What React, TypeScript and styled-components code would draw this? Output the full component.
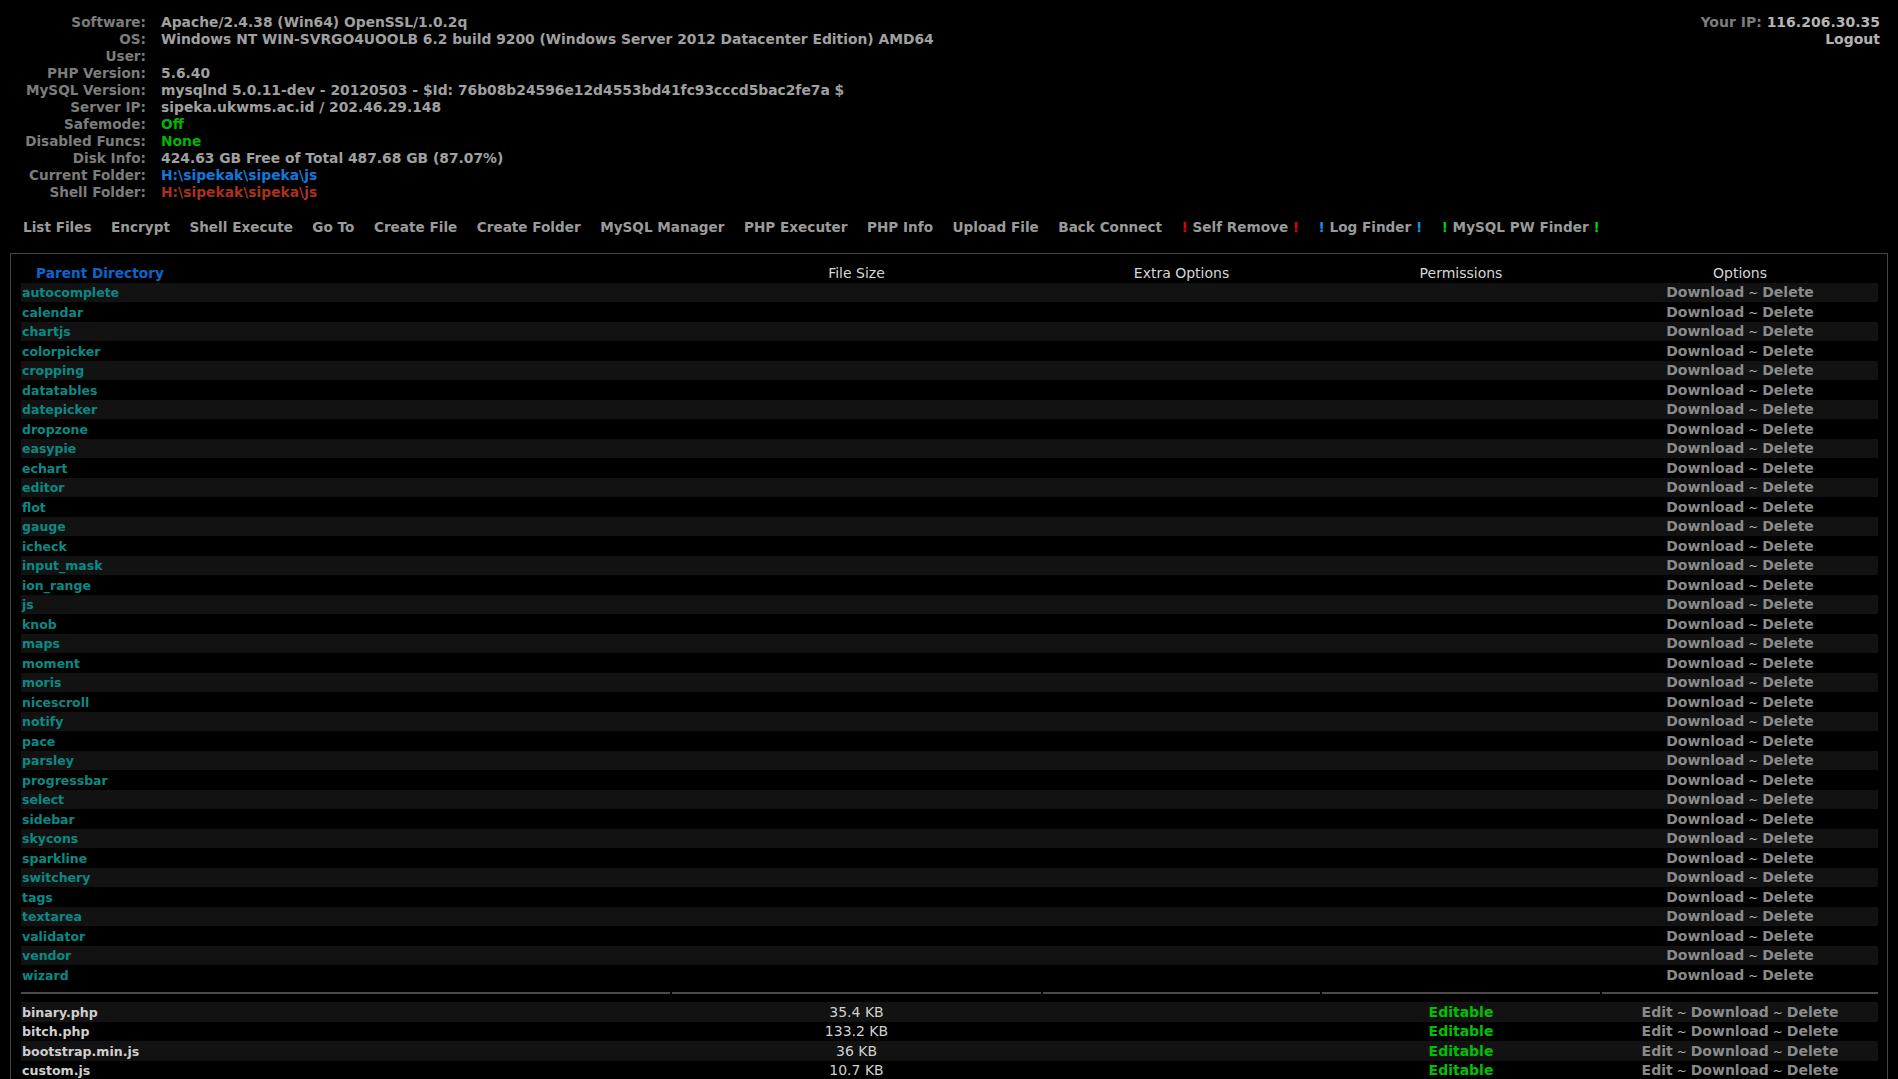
import React from "react";
import styled, { createGlobalStyle } from "styled-components";

const GlobalStyle = createGlobalStyle`
  html { scrollbar-width: none; background: #000; }
  html::-webkit-scrollbar { display: none; }
  body {
    margin: 0;
    background: #000;
    color: #a0a0a0;
    font-family: "DejaVu Sans", Verdana, sans-serif;
    font-size: 14px;
    font-weight: bold;
  }
`;

const Page = styled.div`
  padding: 14px 10px 0 10px;
`;

const Header = styled.div`
  display: flex;
  justify-content: space-between;
  align-items: flex-start;
`;

const InfoGrid = styled.div`
  display: grid;
  grid-template-columns: 136px auto;
  column-gap: 15px;
  grid-auto-rows: 17px;
  line-height: 17px;
`;

const Label = styled.div`
  text-align: right;
  color: #7c7c7c;
  white-space: nowrap;
  font-size: 13.6px;
`;

const Value = styled.div<{ $tone?: "green" | "blue" | "red" }>`
  white-space: nowrap;
  font-size: 13.85px;
  color: ${(p) =>
    p.$tone === "green"
      ? "#00b400"
      : p.$tone === "blue"
      ? "#1577d8"
      : p.$tone === "red"
      ? "#a8321e"
      : "#a0a0a0"};
`;

const RightInfo = styled.div`
  text-align: right;
  line-height: 17px;
  padding-right: 8px;
  color: #7c7c7c;
`;

const Bright = styled.span`
  color: #b4b4b4;
`;

const Menu = styled.nav`
  display: flex;
  gap: 19.5px;
  margin-top: 18px;
  padding-left: 13px;
  line-height: 17px;
  font-size: 13.6px;
`;

const MenuItem = styled.a`
  color: #9a9a9a;
  text-decoration: none;
  white-space: nowrap;
`;

const Bang = styled.span<{ $c: string }>`
  color: ${(p) => p.$c};
`;

const Panel = styled.div`
  margin-top: 17px;
  border: 1px solid #444;
  padding: 9px 9px 20px 10px;
`;

const Row = styled.div<{ $striped?: boolean }>`
  display: grid;
  grid-template-columns: 649px 369px 277px 278px 1fr;
  column-gap: 2px;
  height: 19.5px;
  align-items: center;
  background: ${(p) => (p.$striped ? "#121212" : "transparent")};
`;

const Cell = styled.div<{ $align?: "left" | "center" }>`
  text-align: ${(p) => p.$align || "center"};
  white-space: nowrap;
  padding-left: ${(p) => (p.$align === "left" ? "1px" : "0")};
`;

const HeadCell = styled(Cell)`
  font-weight: normal;
  color: #d6d6d6;
`;

const ParentLink = styled.a`
  color: #0b66cc;
  text-decoration: none;
  padding-left: 14px;
  font-size: 13.7px;
`;

const FolderLink = styled.a`
  color: #0a8a85;
  text-decoration: none;
  font-size: 12.5px;
`;

const FileName = styled.a`
  color: #cfcfcf;
  text-decoration: none;
  font-size: 12.6px;
`;

const Size = styled(Cell)`
  font-weight: normal;
  color: #d0d0d0;
`;

const Editable = styled(Cell)`
  color: #00c000;
`;

const OptLink = styled.a`
  color: #8a8a8a;
  text-decoration: none;
`;

const Tilde = styled.span`
  color: #b0b0b0;
  font-weight: normal;
  font-size: 12px;
  padding: 0 4px;
`;

const DividerRow = styled.div`
  display: grid;
  grid-template-columns: 649px 369px 277px 278px 1fr;
  column-gap: 2px;
  height: 17.5px;
  align-items: center;
`;

const Rule = styled.div`
  height: 2px;
  background: #4a4a4a;
`;

const folders = [
  "autocomplete", "calendar", "chartjs", "colorpicker", "cropping", "datatables",
  "datepicker", "dropzone", "easypie", "echart", "editor", "flot", "gauge", "icheck",
  "input_mask", "ion_range", "js", "knob", "maps", "moment", "moris", "nicescroll",
  "notify", "pace", "parsley", "progressbar", "select", "sidebar", "skycons",
  "sparkline", "switchery", "tags", "textarea", "validator", "vendor", "wizard",
];

const files = [
  { name: "binary.php", size: "35.4 KB" },
  { name: "bitch.php", size: "133.2 KB" },
  { name: "bootstrap.min.js", size: "36 KB" },
  { name: "custom.js", size: "10.7 KB" },
];

const info: { label: string; value: string; tone?: "green" | "blue" | "red" }[] = [
  { label: "Software:", value: "Apache/2.4.38 (Win64) OpenSSL/1.0.2q" },
  { label: "OS:", value: "Windows NT WIN-SVRGO4UOOLB 6.2 build 9200 (Windows Server 2012 Datacenter Edition) AMD64" },
  { label: "User:", value: "" },
  { label: "PHP Version:", value: "5.6.40" },
  { label: "MySQL Version:", value: "mysqlnd 5.0.11-dev - 20120503 - $Id: 76b08b24596e12d4553bd41fc93cccd5bac2fe7a $" },
  { label: "Server IP:", value: "sipeka.ukwms.ac.id / 202.46.29.148" },
  { label: "Safemode:", value: "Off", tone: "green" },
  { label: "Disabled Funcs:", value: "None", tone: "green" },
  { label: "Disk Info:", value: "424.63 GB Free of Total 487.68 GB (87.07%)" },
  { label: "Current Folder:", value: "H:\\sipekak\\sipeka\\js", tone: "blue" },
  { label: "Shell Folder:", value: "H:\\sipekak\\sipeka\\js", tone: "red" },
];

const menu = [
  "List Files", "Encrypt", "Shell Execute", "Go To", "Create File", "Create Folder",
  "MySQL Manager", "PHP Executer", "PHP Info", "Upload File", "Back Connect",
];

const bangItems = [
  { label: "Self Remove", color: "#e00000" },
  { label: "Log Finder", color: "#1a8fe6" },
  { label: "MySQL PW Finder", color: "#00d000" },
];

export default function App() {
  return (
    <>
      <GlobalStyle />
      <Page>
        <Header>
          <InfoGrid>
            {info.map((r) => (
              <React.Fragment key={r.label}>
                <Label>{r.label}</Label>
                <Value $tone={r.tone}>{r.value}</Value>
              </React.Fragment>
            ))}
          </InfoGrid>
          <RightInfo>
            <div>
              Your IP: <Bright>116.206.30.35</Bright>
            </div>
            <div>
              <Bright>Logout</Bright>
            </div>
          </RightInfo>
        </Header>
        <Menu>
          {menu.map((m) => (
            <MenuItem key={m} href="#">{m}</MenuItem>
          ))}
          {bangItems.map((b) => (
            <MenuItem key={b.label} href="#">
              <Bang $c={b.color}>!</Bang> {b.label} <Bang $c={b.color}>!</Bang>
            </MenuItem>
          ))}
        </Menu>
        <Panel>
          <Row>
            <Cell $align="left">
              <ParentLink href="#">Parent Directory</ParentLink>
            </Cell>
            <HeadCell>File Size</HeadCell>
            <HeadCell>Extra Options</HeadCell>
            <HeadCell>Permissions</HeadCell>
            <HeadCell>Options</HeadCell>
          </Row>
          {folders.map((f, i) => (
            <Row key={f} $striped={i % 2 === 0}>
              <Cell $align="left">
                <FolderLink href="#">{f}</FolderLink>
              </Cell>
              <Cell />
              <Cell />
              <Cell />
              <Cell>
                <OptLink href="#">Download</OptLink>
                <Tilde>~</Tilde>
                <OptLink href="#">Delete</OptLink>
              </Cell>
            </Row>
          ))}
          <DividerRow>
            <Rule />
            <Rule />
            <Rule />
            <Rule />
            <Rule />
          </DividerRow>
          {files.map((f, i) => (
            <Row key={f.name} $striped={i % 2 === 0}>
              <Cell $align="left">
                <FileName href="#">{f.name}</FileName>
              </Cell>
              <Size>{f.size}</Size>
              <Cell />
              <Editable>Editable</Editable>
              <Cell>
                <OptLink href="#">Edit</OptLink>
                <Tilde>~</Tilde>
                <OptLink href="#">Download</OptLink>
                <Tilde>~</Tilde>
                <OptLink href="#">Delete</OptLink>
              </Cell>
            </Row>
          ))}
        </Panel>
      </Page>
    </>
  );
}
